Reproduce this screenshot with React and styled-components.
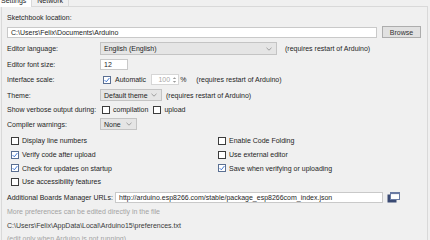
import React from "react";
import styled, { createGlobalStyle } from "styled-components";

const GlobalStyle = createGlobalStyle`
  html, body { margin: 0; padding: 0; background: #f0f0f0; }
  body {
    font-family: "Liberation Sans", Arial, sans-serif;
    font-size: 7px;
    color: #1e1e1e;
    overflow: hidden;
  }
  * { box-sizing: border-box; }
`;

const Window = styled.div`
  width: 430px;
  height: 240px;
  overflow: hidden;
  padding-left: 1px;
  background: #f0f0f0;
`;

const TabStrip = styled.div`
  display: flex;
  height: 16px;
  margin-top: -9px;
  margin-left: -6px;
`;

const Tab = styled.div`
  display: flex;
  align-items: center;
  padding: 3px 5px 0 5px;
  height: 16px;
  background: ${(p) => (p.$active ? "#ffffff" : "#f0f0f0")};
  border: 1px solid #d9d9d9;
  border-bottom: ${(p) => (p.$active ? "1px solid #ffffff" : "1px solid #d9d9d9")};
  margin-left: ${(p) => (p.$active ? "0" : "-1px")};
`;

const Panel = styled.div`
  width: 427px;
  height: 240px;
  margin-top: -1px;
  border: 1px solid #d9d9d9;
  border-bottom: none;
  background: #f0f0f0;
  padding: 0 5px;
  display: flex;
  flex-direction: column;
`;

const Row = styled.div`
  display: flex;
  align-items: center;
  height: ${(p) => p.$h || 12}px;
  margin-top: ${(p) => p.$mt || 0}px;
  gap: ${(p) => p.$gap || 0}px;
  white-space: nowrap;
`;

const Label = styled.span`
  width: ${(p) => p.$w || 93}px;
  flex: none;
`;

const TextField = styled.div`
  height: ${(p) => p.$h || 11}px;
  width: ${(p) => p.$w}px;
  flex: none;
  background: #ffffff;
  border: 1px solid #c9c9c9;
  display: flex;
  align-items: center;
  padding: 0 3px;
  overflow: hidden;
  color: #1e1e1e;
`;

const Button = styled.div`
  height: 12px;
  width: 39px;
  flex: none;
  background: #e1e1e1;
  border: 1px solid #adadad;
  display: flex;
  align-items: center;
  justify-content: center;
  color: #333;
`;

const Select = styled.div`
  height: ${(p) => p.$h || 12}px;
  width: ${(p) => p.$w}px;
  flex: none;
  background: #e5e5e5;
  border: 1px solid #c4c4c4;
  display: flex;
  align-items: center;
  justify-content: space-between;
  padding: 0 4px 0 3px;
`;

const Chevron = () => (
  <svg width="6" height="4" viewBox="0 0 6 4">
    <path d="M0.5 0.8 L3 3.2 L5.5 0.8" fill="none" stroke="#8a8a8a" strokeWidth="0.8" />
  </svg>
);

const Note = styled.span`
  margin-left: ${(p) => p.$ml || 0}px;
`;

const Box = styled.span`
  width: 8px;
  height: 8px;
  flex: none;
  background: #ffffff;
  border: 1px solid ${(p) => (p.$checked ? "#5a6f92" : "#3c3c3c")};
  display: inline-flex;
  align-items: center;
  justify-content: center;
  margin-right: ${(p) => p.$mr ?? 3}px;
  margin-left: ${(p) => p.$ml || 0}px;
`;

const CheckBox = ({ checked, mr, ml }) => (
  <Box $checked={checked} $mr={mr} $ml={ml}>
    {checked && (
      <svg width="6" height="6" viewBox="0 0 6 6">
        <path d="M0.6 3.1 L2.3 4.8 L5.4 1" fill="none" stroke="#2f6bd0" strokeWidth="0.9" />
      </svg>
    )}
  </Box>
);

const Check = styled.div`
  display: flex;
  align-items: center;
  height: 13.7px;
  white-space: nowrap;
`;

const CheckGrid = styled.div`
  display: grid;
  grid-template-columns: 207px 1fr;
  margin-top: 4px;
  padding-left: 4px;
`;

const Spinner = styled.div`
  height: 11px;
  width: 28px;
  margin-left: 5px;
  background: #ffffff;
  border: 1px solid #d6d6d6;
  display: flex;
  align-items: center;
  justify-content: flex-end;
  padding-right: 1px;
  color: #a8a8a8;
  gap: 2px;
`;

const Arrows = () => (
  <svg width="5" height="8" viewBox="0 0 5 8">
    <path d="M0.8 3 L2.5 1.2 L4.2 3" fill="#9a9a9a" />
    <path d="M0.8 5 L2.5 6.8 L4.2 5" fill="#9a9a9a" />
  </svg>
);

const IconButton = styled.div`
  width: 13px;
  height: 11px;
  margin-left: 4px;
  display: flex;
  align-items: center;
  justify-content: center;
`;

const WindowsIcon = () => (
  <svg width="13" height="11" viewBox="0 0 13 11">
    <rect x="0.5" y="2.5" width="9" height="8" fill="#3a4a73" />
    <rect x="3.5" y="0.5" width="9" height="7" fill="#ffffff" stroke="#6a7ba3" strokeWidth="1" />
    <rect x="3.5" y="0.5" width="9" height="1.6" fill="#6a7ba3" />
  </svg>
);

const Info = styled.div`
  height: 13.5px;
  display: flex;
  align-items: center;
  white-space: nowrap;
  color: ${(p) => (p.$muted ? "#a3a3a3" : "#3a3a3a")};
`;

const InfoBlock = styled.div`
  margin-top: 1px;
  display: flex;
  flex-direction: column;
`;

export default function App() {
  return (
    <>
      <GlobalStyle />
      <Window>
        <TabStrip>
          <Tab $active>Settings</Tab>
          <Tab>Network</Tab>
        </TabStrip>
        <Panel>
          <Row $h={9} $mt={6}>Sketchbook location:</Row>
          <Row $h={12} $mt={4} $gap={5}>
            <TextField $w={370}>C:\Users\Felix\Documents\Arduino</TextField>
            <Button>Browse</Button>
          </Row>
          <Row $h={13} $mt={4}>
            <Label>Editor language:</Label>
            <Select $w={177} $h={13}>
              <span>English (English)</span>
              <Chevron />
            </Select>
            <Note $ml={8}>(requires restart of Arduino)</Note>
          </Row>
          <Row $h={11} $mt={4}>
            <Label>Editor font size:</Label>
            <TextField $w={28}>12</TextField>
          </Row>
          <Row $h={11} $mt={4}>
            <Label>Interface scale:</Label>
            <CheckBox checked ml={3} mr={4} />
            <span>Automatic</span>
            <Spinner>
              <span>100</span>
              <Arrows />
            </Spinner>
            <Note $ml={1}>%</Note>
            <Note $ml={10}>(requires restart of Arduino)</Note>
          </Row>
          <Row $h={12} $mt={4}>
            <Label>Theme:</Label>
            <Select $w={62}>
              <span>Default theme</span>
              <Chevron />
            </Select>
            <Note $ml={4}>(requires restart of Arduino)</Note>
          </Row>
          <Row $h={11} $mt={3}>
            <Label>Show verbose output during:</Label>
            <CheckBox ml={2} />
            <span>compilation</span>
            <CheckBox ml={5} />
            <span>upload</span>
          </Row>
          <Row $h={12} $mt={3}>
            <Label>Compiler warnings:</Label>
            <Select $w={37}>
              <span>None</span>
              <Chevron />
            </Select>
          </Row>
          <CheckGrid>
            <Check><CheckBox />Display line numbers</Check>
            <Check><CheckBox />Enable Code Folding</Check>
            <Check><CheckBox checked />Verify code after upload</Check>
            <Check><CheckBox />Use external editor</Check>
            <Check><CheckBox checked />Check for updates on startup</Check>
            <Check><CheckBox checked />Save when verifying or uploading</Check>
            <Check><CheckBox />Use accessibility features</Check>
          </CheckGrid>
          <Row $h={12} $mt={3}>
            <Label $w={108}>Additional Boards Manager URLs:</Label>
            <TextField $w={268}>http://arduino.esp8266.com/stable/package_esp8266com_index.json</TextField>
            <IconButton>
              <WindowsIcon />
            </IconButton>
          </Row>
          <InfoBlock>
            <Info $muted>More preferences can be edited directly in the file</Info>
            <Info>C:\Users\Felix\AppData\Local\Arduino15\preferences.txt</Info>
            <Info $muted>(edit only when Arduino is not running)</Info>
          </InfoBlock>
        </Panel>
      </Window>
    </>
  );
}
